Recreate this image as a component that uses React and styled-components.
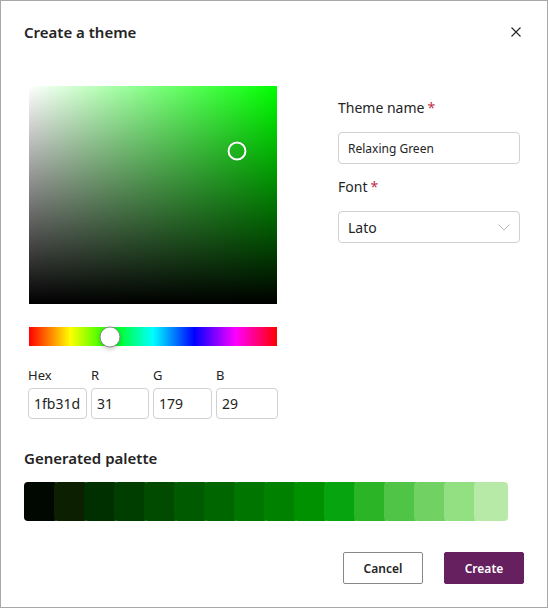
import React from "react"
import styled, { createGlobalStyle } from "styled-components"

const GlobalStyle = createGlobalStyle`
  html, body {
    margin: 0;
    padding: 0;
    background: #ffffff;
  }
  * {
    box-sizing: border-box;
  }
`

const palette = [
  "#010701",
  "#0c1f00",
  "#003000",
  "#003e00",
  "#004b00",
  "#005a00",
  "#006700",
  "#007500",
  "#008200",
  "#009100",
  "#06a50f",
  "#2bb526",
  "#50c446",
  "#71d163",
  "#93e083",
  "#b6eaa6",
]

const Dialog = styled.div`
  width: 548px;
  height: 608px;
  border: 1px solid #a8a8a8;
  background: #fff;
  font-family: "Noto Sans", "Open Sans", sans-serif;
  color: #242424;
  padding: 0 23px;
  display: flex;
  flex-direction: column;
`

const Header = styled.div`
  height: 61px;
  display: flex;
  align-items: center;
  justify-content: space-between;
`

const Title = styled.h1`
  margin: 0;
  font-size: 15px;
  font-weight: 600;
  color: #242424;
`

const CloseButton = styled.button`
  border: none;
  background: none;
  padding: 0;
  width: 14px;
  height: 14px;
  margin-right: 1px;
  display: flex;
  align-items: center;
  justify-content: center;
  cursor: pointer;
`

const Body = styled.div`
  display: flex;
  padding-top: 24px;
`

const PickerColumn = styled.div`
  width: 255px;
  padding-left: 4px;
  display: flex;
  flex-direction: column;
`

const Saturation = styled.div`
  position: relative;
  width: 248px;
  height: 218px;
  margin-left: 1px;
  background: linear-gradient(to top, #000, rgba(0, 0, 0, 0)),
    linear-gradient(to right, #fff, #00ff00);
`

const SatCursor = styled.div`
  position: absolute;
  width: 19px;
  height: 19px;
  border-radius: 50%;
  border: 2px solid #fff;
  box-shadow: 0 0 1px rgba(0, 0, 0, 0.5);
  transform: translate(-50%, -50%);
`

const HueTrack = styled.div`
  position: relative;
  width: 248px;
  height: 19px;
  margin: 23px 0 0 1px;
  background: linear-gradient(
    to right,
    #ff0000,
    #ffff00 16.66%,
    #00ff00 33.33%,
    #00ffff 50%,
    #0000ff 66.66%,
    #ff00ff 83.33%,
    #ff0000
  );
`

const HueThumb = styled.div`
  position: absolute;
  top: 50%;
  width: 21px;
  height: 21px;
  border-radius: 50%;
  background: #fff;
  border: 1px solid #8a8a8a;
  box-shadow: 0 2px 4px rgba(0, 0, 0, 0.18);
  transform: translate(-50%, -50%);
`

const ChannelRow = styled.div`
  display: grid;
  grid-template-columns: 59px 58px 59px 62px;
  column-gap: 4px;
  margin-top: 20px;
`

const Channel = styled.label`
  display: flex;
  flex-direction: column;
  font-size: 13px;
  color: #242424;
  gap: 4px;
`

const ChannelInput = styled.input`
  width: 100%;
  height: 31px;
  border: 1px solid #d1d1d1;
  border-radius: 4px;
  padding: 0 5px;
  font-family: inherit;
  font-size: 14px;
  color: #242424;
  outline: none;
`

const FieldColumn = styled.div`
  margin-left: 59px;
  width: 182px;
  display: flex;
  flex-direction: column;
  padding-top: 12px;
`

const FieldLabel = styled.label`
  font-size: 14px;
  color: #242424;
  margin-bottom: 14px;
  line-height: 20px;
`

const Required = styled.span`
  color: #c4314b;
  margin-left: 3px;
`

const TextField = styled.input`
  width: 100%;
  height: 32px;
  border: 1px solid #d1d1d1;
  border-radius: 4px;
  padding: 0 9px;
  font-family: inherit;
  font-size: 12px;
  color: #242424;
  outline: none;
  margin-bottom: 13px;
`

const Select = styled.div`
  width: 100%;
  height: 32px;
  border: 1px solid #d1d1d1;
  border-radius: 4px;
  padding: 0 9px;
  font-size: 14px;
  display: flex;
  align-items: center;
  justify-content: space-between;
`

const SectionTitle = styled.h2`
  margin: 28px 0 0;
  font-size: 15px;
  font-weight: 600;
  line-height: 22px;
  color: #242424;
`

const Palette = styled.div`
  display: flex;
  width: 484px;
  height: 39px;
  margin-top: 13px;
`

const Swatch = styled.div`
  flex: 1;
  border-radius: 4px;
  background: ${(p) => p.$color};
  & + & {
    margin-left: -4px;
  }
`

const Footer = styled.div`
  display: flex;
  justify-content: flex-end;
  gap: 21px;
  margin-top: 31px;
`

const Button = styled.button`
  width: 80px;
  height: 32px;
  border-radius: 2px;
  font-family: inherit;
  font-size: 12px;
  font-weight: 600;
  cursor: pointer;
  border: 1px solid ${(p) => (p.$primary ? "#661f5f" : "#8a8886")};
  background: ${(p) => (p.$primary ? "#661f5f" : "#fff")};
  color: ${(p) => (p.$primary ? "#fff" : "#242424")};
`

export default function App() {
  const hue = 120
  return (
    <>
      <GlobalStyle />
      <Dialog>
        <Header>
          <Title>Create a theme</Title>
          <CloseButton aria-label="Close">
            <svg width="10" height="10" viewBox="0 0 10 10">
              <path d="M0.5 0.5 L9.5 9.5 M9.5 0.5 L0.5 9.5" stroke="#242424" strokeWidth="1.1" />
            </svg>
          </CloseButton>
        </Header>
        <Body>
          <PickerColumn>
            <Saturation>
              <SatCursor style={{ left: 208, top: 65 }} />
            </Saturation>
            <HueTrack>
              <HueThumb style={{ left: `${(hue / 360) * 100 - 0.5}%` }} />
            </HueTrack>
            <ChannelRow>
              <Channel>
                Hex
                <ChannelInput defaultValue="1fb31d" />
              </Channel>
              <Channel>
                R
                <ChannelInput defaultValue="31" />
              </Channel>
              <Channel>
                G
                <ChannelInput defaultValue="179" />
              </Channel>
              <Channel>
                B
                <ChannelInput defaultValue="29" />
              </Channel>
            </ChannelRow>
          </PickerColumn>
          <FieldColumn>
            <FieldLabel>
              Theme name<Required>*</Required>
            </FieldLabel>
            <TextField defaultValue="Relaxing Green" />
            <FieldLabel>
              Font<Required>*</Required>
            </FieldLabel>
            <Select>
              <span>Lato</span>
              <svg width="12" height="7" viewBox="0 0 12 7">
                <path d="M0.5 0.5 L6 6 L11.5 0.5" fill="none" stroke="#b8b8b8" strokeWidth="1" />
              </svg>
            </Select>
          </FieldColumn>
        </Body>
        <SectionTitle>Generated palette</SectionTitle>
        <Palette>
          {palette.map((c) => (
            <Swatch key={c} $color={c} />
          ))}
        </Palette>
        <Footer>
          <Button>Cancel</Button>
          <Button $primary>Create</Button>
        </Footer>
      </Dialog>
    </>
  )
}
